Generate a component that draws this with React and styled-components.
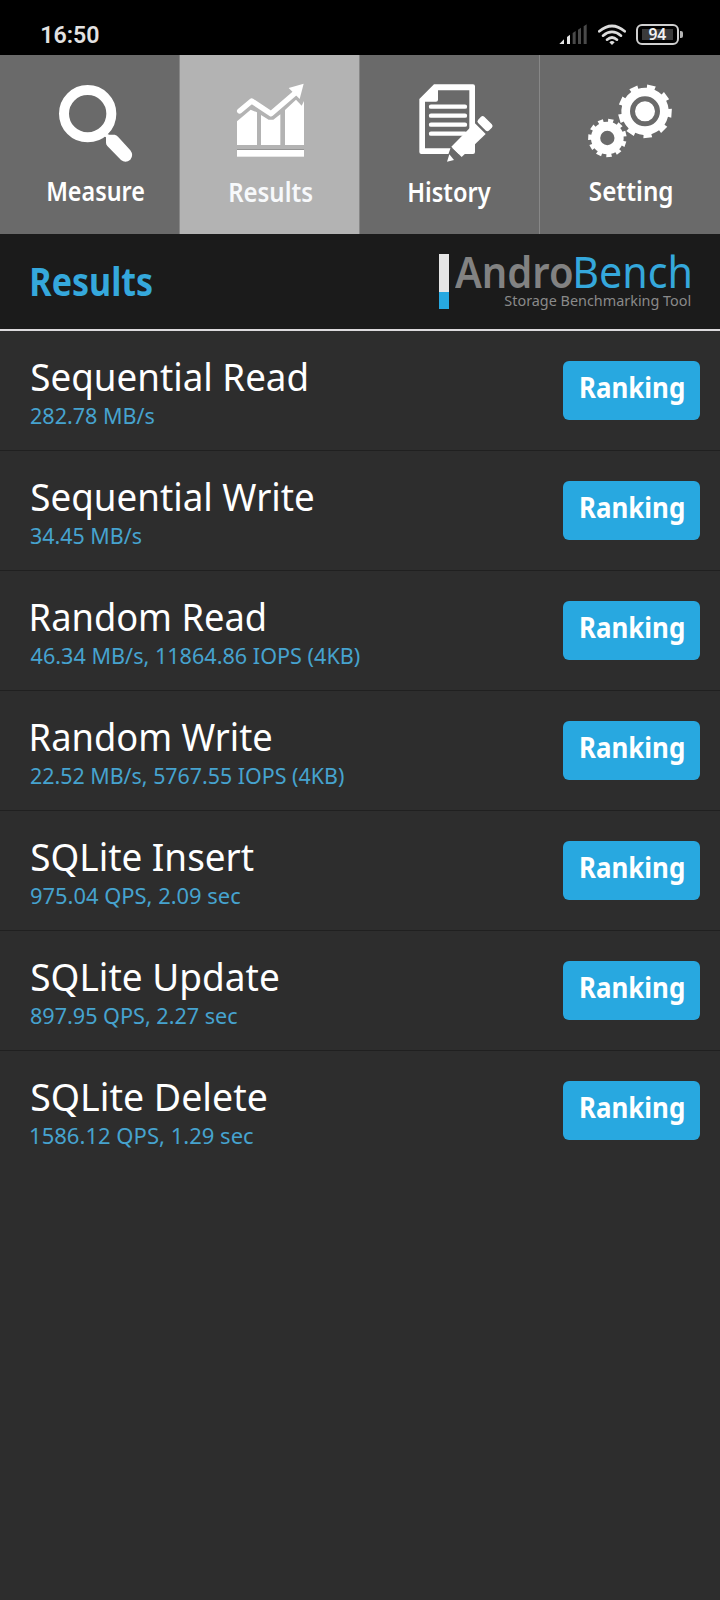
import React, { useLayoutEffect, useRef, useState } from "react";
import styled, { createGlobalStyle } from "styled-components";

const Global = createGlobalStyle`
  html, body { margin: 0; padding: 0; background: #2d2d2d; }
  * { box-sizing: border-box; }
`;

const Screen = styled.div`
  width: 720px;
  min-height: 1600px;
  display: flex;
  flex-direction: column;
  background: #2d2d2d;
  font-family: "Noto Sans", "Open Sans", sans-serif;
  overflow: hidden;
`;

const FitBox = styled.span`
  display: block;
  flex: none;
  width: ${(p) => p.$width}px;
  white-space: nowrap;
`;

const FitInner = styled.span`
  display: inline-block;
  transform-origin: 0 50%;
`;

/* Condenses or widens a line so that its ink spans exactly the given width. */
function Fit({ width, children }) {
  const ref = useRef(null);
  const [t, setT] = useState({ x: 0, s: 1 });
  useLayoutEffect(() => {
    const cs = getComputedStyle(ref.current);
    const ctx = document.createElement("canvas").getContext("2d");
    // Measured at ten times the size, since glyph bounds are rounded to pixels.
    ctx.font = `${cs.fontWeight} ${parseFloat(cs.fontSize) * 10}px ${cs.fontFamily}`;
    const m = ctx.measureText(children);
    const s = (width * 10) / (m.actualBoundingBoxLeft + m.actualBoundingBoxRight);
    setT({ s, x: (m.actualBoundingBoxLeft / 10) * s });
  }, [children, width]);
  return (
    <FitBox $width={width}>
      <FitInner ref={ref} style={{ transform: `translateX(${t.x}px) scaleX(${t.s})` }}>
        {children}
      </FitInner>
    </FitBox>
  );
}

const StatusBar = styled.header`
  height: 55px;
  padding: 15px 37.5px 0 42px;
  display: flex;
  justify-content: space-between;
  background: #000;
`;

const Clock = styled.div`
  font: 600 23px/42px Roboto, sans-serif;
  color: #e2e2e2;
`;

const StatusIcons = styled.div`
  display: flex;
  align-items: flex-start;
  padding-top: 9px;
`;

const Signal = styled.svg`
  width: 28px;
  height: 21px;
  margin-right: 11px;
`;

const Wifi = styled.svg`
  width: 28px;
  height: 21px;
  margin-right: 10px;
`;

const Battery = styled.div`
  width: 43px;
  height: 21px;
  padding: 3px 4px;
  border: 2px solid #cfcfcf;
  border-radius: 6px;
`;

const BatteryLevel = styled.div`
  width: 31px;
  height: 11px;
  display: flex;
  justify-content: center;
  background: #3a3a3a;
  color: #f2f2f2;
  font: 600 15.5px/11px "Noto Sans", sans-serif;
`;

const BatteryTip = styled.div`
  width: 2.5px;
  height: 7px;
  margin: 7px 0 0 1px;
  border-radius: 0 2px 2px 0;
  background: #b5b5b5;
`;

const Tabs = styled.nav`
  display: grid;
  grid-template-columns: repeat(4, 180px);
  height: 179px;
`;

const Tab = styled.div`
  display: flex;
  flex-direction: column;
  background: ${(p) => (p.$active ? "#b3b3b3" : "#6a6a6a")};
  border-right: ${(p) => (p.$last ? "0" : "1px solid #878787")};
`;

const TabIcon = styled.svg`
  width: 180px;
  height: 110px;
  flex: none;
`;

const TabLabel = styled.div`
  padding-left: ${(p) => p.$left}px;
  margin-top: ${(p) => p.$top}px;
  color: ${(p) => (p.$active ? "#f7f9fb" : "#fff")};
  font-size: 27px;
  line-height: 40px;
  font-weight: 600;
`;

const TitleBar = styled.div`
  height: 97px;
  display: flex;
  justify-content: space-between;
  padding: 0 30px 0 32px;
  background: #1b1b1b;
  border-bottom: 2px solid #dcdadd;
`;

const Heading = styled.h1`
  margin: 19px 0 0;
  color: #35a8dc;
  font-size: 39px;
  line-height: 56px;
  font-weight: 700;
`;

const Logo = styled.div`
  display: flex;
  width: 251px;
  padding-top: 20px;
`;

const LogoBar = styled.div`
  width: 10px;
  height: 55px;
  margin-right: 6px;
  background: linear-gradient(#e6e6e6 38px, #27a9e1 38px);
`;

const LogoText = styled.div`
  display: flex;
  flex-direction: column;
`;

const Wordmark = styled.div`
  display: flex;
  height: 34px;
  font-size: 44px;
  line-height: 34px;
`;

const Andro = styled.div`
  width: 121px;
  color: #828282;
  font-weight: 600;
`;

const Bench = styled.div`
  color: #35a8dc;
  font-weight: 400;
`;

const Tagline = styled.div`
  margin-left: 50px;
  color: #8a8a8a;
  font-size: 15px;
  line-height: 24px;
`;

const Row = styled.section`
  height: 120px;
  display: flex;
  justify-content: space-between;
  align-items: flex-start;
  padding: 30px 20px 0 31px;
  border-bottom: 1px solid ${(p) => (p.$last ? "transparent" : "#202020")};
`;

const RowText = styled.div`
  display: flex;
  flex-direction: column;
`;

const RowTitle = styled.div`
  margin-top: -11px;
  padding-left: 1px;
  color: #fff;
  font-size: 39px;
  line-height: 52px;
`;

const RowValue = styled.div`
  margin-top: -1px;
  color: #46a3cf;
  font-size: 22.5px;
  line-height: 30px;
`;

const RankingButton = styled.button`
  width: 137px;
  height: 59px;
  padding: 0 0 7px 18px;
  border: 0;
  border-radius: 6px;
  background: #28a8e0;
  color: #fff;
  font: 700 29px/52px "Noto Sans", sans-serif;
  text-align: left;
`;

const gear = (cx, cy, body, outer, n, start, half) => {
  const pt = (r, a) =>
    `${(cx + r * Math.cos((a * Math.PI) / 180)).toFixed(1)} ${(cy + r * Math.sin((a * Math.PI) / 180)).toFixed(1)}`;
  let d = "";
  for (let i = 0; i < n; i++) {
    const a = start + (i * 360) / n;
    const b = a + 360 / n;
    d += `${i ? "L" : "M"}${pt(body, a - half)}L${pt(outer, a - half)}L${pt(outer, a + half)}L${pt(body, a + half)}`;
    d += `A${body} ${body} 0 0 1 ${pt(body, b - half)}`;
  }
  return d + "Z";
};

const MeasureIcon = () => (
  <TabIcon viewBox="0 165 540 330">
    <circle cx="263" cy="341" r="71" fill="none" stroke="#fff" strokeWidth="30" />
    <path d="M316 400L328 404H344Q350 405 354 410L391 451Q402 466 391 479Q377 491 363 480L322 438Q318 434 318 428V412L306 406Z" fill="#fff" />
  </TabIcon>
);

const ResultsIcon = () => (
  <TabIcon viewBox="540 165 540 330">
    <g fill="#fff">
      <path d="M711 364L752 329L771 337V435H711Z" />
      <path d="M783 345L806 359H820L841 343V435H783Z" />
      <path d="M855 330L888 299L905 317L912 303V435H855Z" />
      <rect x="711" y="450" width="201" height="20" />
      <path d="M866 264L911 251L899 297Z" />
    </g>
    <path d="M711 448.500H912" stroke="#949494" strokeWidth="3" />
    <path d="M719 333L755 303L813 341L888 277" fill="none" stroke="#fff" strokeWidth="16" strokeLinecap="round" strokeLinejoin="round" />
  </TabIcon>
);

const HistoryIcon = () => (
  <TabIcon viewBox="0 165 540 330">
    <path
      d="M222 253H339Q345 253 345 259V456Q345 462 339 462H184Q178 462 178 456V297ZM234 271V299Q234 305 228 305H195V445H328V271Z"
      fill="#fff"
      fillRule="evenodd"
    />
    <path d="M213 320H315M213 347H315M213 374H315M213 401H315" stroke="#fff" strokeWidth="13" strokeLinecap="round" />
    <path d="M273 440L306 471L286 488L264 466Z" fill="#6a6a6a" />
    <path d="M344 369L377 402L305 471L274 440Z" fill="#fff" />
    <path d="M268 463L282 480L261 485Z" fill="#fff" />
    <rect x="352" y="358" width="46" height="26" rx="7" transform="rotate(45 375 371)" fill="#fff" />
  </TabIcon>
);

const SettingIcon = () => (
  <TabIcon viewBox="540 165 540 330">
    <path d={gear(855, 334, 71, 81, 9, -76, 9.5)} fill="#fff" />
    <circle cx="855" cy="334" r="37.500" fill="none" stroke="#6a6a6a" strokeWidth="15" />
    <path d={gear(742, 414, 49, 58, 11, -79, 8.5)} fill="#fff" />
    <circle cx="742" cy="414" r="21.500" fill="#6a6a6a" />
  </TabIcon>
);

const tabs = [
  { label: "Measure", Icon: MeasureIcon, left: 48, width: 96, top: 6 },
  { label: "Results", Icon: ResultsIcon, left: 50, width: 82, top: 7, active: true },
  { label: "History", Icon: HistoryIcon, left: 49, width: 82, top: 7 },
  { label: "Setting", Icon: SettingIcon, left: 50, width: 82, top: 6 },
];

const results = [
  { name: "Sequential Read", w: 274, value: "282.78 MB/s", vw: 123 },
  { name: "Sequential Write", w: 281, value: "34.45 MB/s", vw: 110 },
  { name: "Random Read", w: 232, value: "46.34 MB/s, 11864.86 IOPS (4KB)", vw: 328.5 },
  { name: "Random Write", w: 239, value: "22.52 MB/s, 5767.55 IOPS (4KB)", vw: 312.5 },
  { name: "SQLite Insert", w: 221.5, value: "975.04 QPS, 2.09 sec", vw: 209 },
  { name: "SQLite Update", w: 246, value: "897.95 QPS, 2.27 sec", vw: 206 },
  { name: "SQLite Delete", w: 234, value: "1586.12 QPS, 1.29 sec", vw: 222 },
];

export default function App() {
  return (
    <Screen>
      <Global />
      <StatusBar>
        <Clock><Fit width={56.5}>16:50</Fit></Clock>
        <StatusIcons>
          <Signal viewBox="596 73 84 63">
            <path d="M597 133L611 119V133Z" fill="#e4e4e4" />
            <path d="M620 133V112L629 105V133Z" fill="#e4e4e4" />
            <path d="M637 133V100L646 94V133ZM653 133V90L662 84V133ZM670 133V80L679 74V133Z" fill="#4a4a4a" />
          </Signal>
          <Wifi viewBox="713 73 84 63">
            <g fill="none" stroke="#dcdcdc" strokeWidth="8" strokeLinecap="round">
              <path d="M717 95Q755 63 793 95" />
              <path d="M728 108Q755 85 782 108" />
              <path d="M740 120Q755 107 770 120" />
            </g>
            <path d="M747 128Q755 120 763 128L755 136Z" fill="#dcdcdc" />
          </Wifi>
          <Battery>
            <BatteryLevel><Fit width={17}>94</Fit></BatteryLevel>
          </Battery>
          <BatteryTip />
        </StatusIcons>
      </StatusBar>
      <Tabs>
        {tabs.map(({ label, Icon, left, width, top, active }, i) => (
          <Tab key={label} $active={active} $last={i === tabs.length - 1}>
            <Icon />
            <TabLabel $left={left} $top={top} $active={active}>
              <Fit width={width}>{label}</Fit>
            </TabLabel>
          </Tab>
        ))}
      </Tabs>
      <TitleBar>
        <Heading><Fit width={120}>Results</Fit></Heading>
        <Logo>
          <LogoBar />
          <LogoText>
            <Wordmark>
              <Andro><Fit width={117}>Andro</Fit></Andro>
              <Bench><Fit width={114}>Bench</Fit></Bench>
            </Wordmark>
            <Tagline><Fit width={185}>Storage Benchmarking Tool</Fit></Tagline>
          </LogoText>
        </Logo>
      </TitleBar>
      {results.map((r, i) => (
        <Row key={r.name} $last={i === results.length - 1}>
          <RowText>
            <RowTitle><Fit width={r.w}>{r.name}</Fit></RowTitle>
            <RowValue><Fit width={r.vw}>{r.value}</Fit></RowValue>
          </RowText>
          <RankingButton><Fit width={102.5}>Ranking</Fit></RankingButton>
        </Row>
      ))}
    </Screen>
  );
}
